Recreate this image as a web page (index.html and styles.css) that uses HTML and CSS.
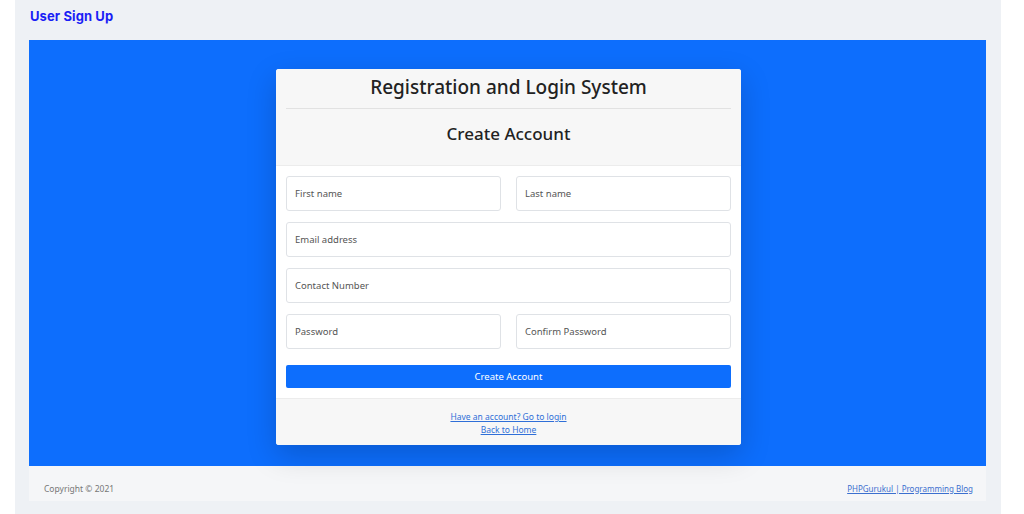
FILE: index.html
```html
<!DOCTYPE html>
<html lang="en">
<head>
<meta charset="utf-8">
<title>User Sign Up</title>
<link rel="stylesheet" href="styles.css">
</head>
<body>
<div class="page">
  <div class="topbar"><span class="page-title">User Sign Up</span></div>
  <main class="stage">
    <div class="card">
      <div class="card-header">
        <h2 class="sys-title">Registration and Login System</h2>
        <hr class="divider">
        <h3 class="form-title">Create Account</h3>
      </div>
      <div class="card-body">
        <div class="row two">
          <div class="field">First name</div>
          <div class="field">Last name</div>
        </div>
        <div class="row">
          <div class="field">Email address</div>
        </div>
        <div class="row">
          <div class="field">Contact Number</div>
        </div>
        <div class="row two">
          <div class="field">Password</div>
          <div class="field">Confirm Password</div>
        </div>
        <button class="btn">Create Account</button>
      </div>
      <div class="card-footer">
        <a href="#">Have an account? Go to login</a>
        <a href="#">Back to Home</a>
      </div>
    </div>
  </main>
  <footer class="footer">
    <span class="copy">Copyright © 2021</span>
    <a href="#" class="blog">PHPGurukul | Programming Blog</a>
  </footer>
</div>
</body>
</html>
```
FILE: styles.css
```css
* { box-sizing: border-box; }
html, body { margin: 0; padding: 0; background: #ffffff; }
body { font-family: "Noto Sans", "Open Sans", sans-serif; }

.page {
  margin-left: 15px;
  width: 986px;
  height: 514px;
  background: #eef1f5;
  padding: 0 15px 0 14px;
}

.topbar {
  height: 40px;
  display: flex;
  align-items: center;
  padding-left: 1px;
  padding-bottom: 9px;
}
.page-title {
  font-family: Inter, "Liberation Sans", sans-serif;
  font-weight: 700;
  font-size: 13px;
  color: #1a1ff5;
  letter-spacing: 0.1px;
}

.stage {
  height: 426px;
  background: #0d6efd;
  display: flex;
  justify-content: center;
  align-items: flex-start;
  padding: 29px 0 0 2px;
}

.card {
  width: 465px;
  background: #ffffff;
  border-radius: 3px;
  overflow: hidden;
  box-shadow: 0 10px 30px rgba(0, 0, 0, 0.18);
}

.card-header {
  background: #f7f7f7;
  border-bottom: 1px solid #ececec;
  padding: 5px 10px 0;
  height: 97px;
  text-align: center;
  color: #222;
}
.sys-title {
  margin: 0;
  font-size: 19px;
  font-weight: 500;
  line-height: 26px;
}
.divider {
  margin: 8px 0 0;
  border: 0;
  border-top: 1px solid #e2e2e2;
}
.form-title {
  margin: 13px 0 0;
  font-size: 17px;
  font-weight: 500;
  line-height: 24px;
}

.card-body {
  padding: 10px;
  display: flex;
  flex-direction: column;
  gap: 11px;
}
.row {
  display: grid;
  grid-template-columns: 1fr;
  gap: 15px;
}
.row.two { grid-template-columns: 1fr 1fr; }
.field {
  height: 35px;
  border: 1px solid #dfe2e6;
  border-radius: 3px;
  background: #fff;
  display: flex;
  align-items: center;
  padding-left: 8px;
  font-size: 9.5px;
  color: #555;
}
.btn {
  margin-top: 5px;
  height: 23px;
  border: 0;
  border-radius: 2px;
  background: #0d6efd;
  color: #fff;
  font-family: "Noto Sans", "Open Sans", sans-serif;
  font-size: 9.5px;
  padding: 0;
}

.card-footer {
  background: #f7f7f7;
  border-top: 1px solid #ececec;
  height: 47px;
  display: flex;
  flex-direction: column;
  align-items: center;
  justify-content: center;
  padding-top: 2px;
}
.card-footer a {
  font-size: 8.5px;
  line-height: 13px;
  color: #2f6fd8;
}

.footer {
  height: 35px;
  background: #f5f6f8;
  display: flex;
  align-items: center;
  justify-content: space-between;
  padding: 9px 13px 0 15px;
  font-size: 8.5px;
}
.copy { color: #777; }
.blog { color: #3b6fcf; font-size: 8px; }
```
